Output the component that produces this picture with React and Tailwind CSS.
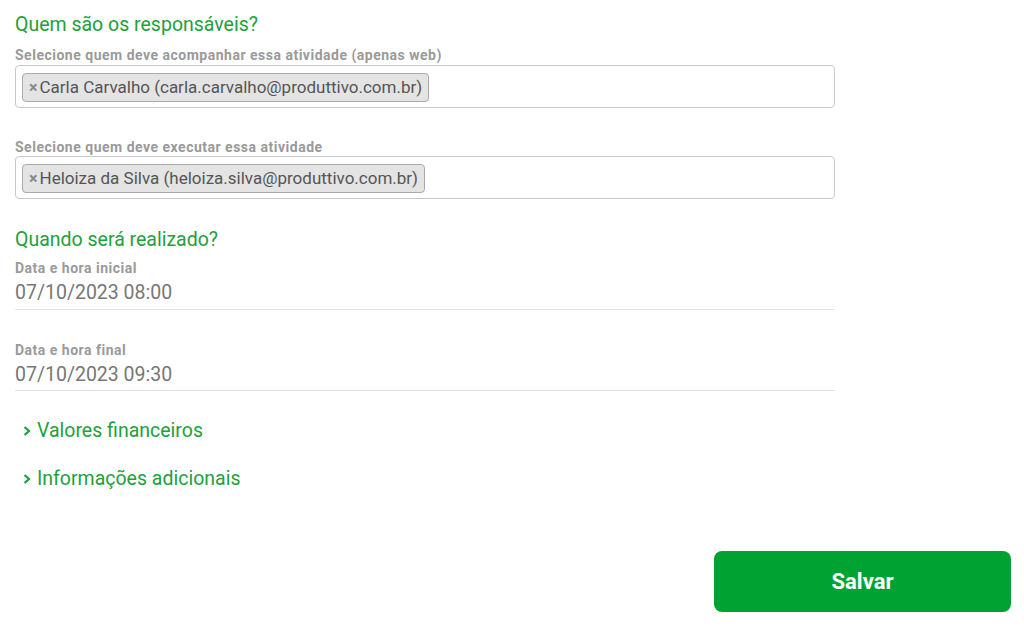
export default function App() {
  const font = { fontFamily: 'Roboto, "Liberation Sans", sans-serif' };

  return (
    <div className="w-[1024px] h-[635px] bg-white overflow-hidden" style={font}>
      <div className="w-[820px] ml-[15px] pt-[13px]">
        {/* Responsáveis */}
        <h2 className="text-[19.5px] leading-[24px] text-[#1ea03c]">Quem são os responsáveis?</h2>
        <label className="block mt-[9px] text-[14px] leading-[18px] font-bold tracking-[0.5px] text-[#9a9a9a]">
          Selecione quem deve acompanhar essa atividade (apenas web)
        </label>
        <div className="mt-[1px] h-[43px] border border-[#c8c8c8] rounded-[4px] px-[6px] pt-[7px]">
          <span className="inline-flex items-center h-[29px] px-[6px] bg-[#e4e4e4] border border-[#aaaaaa] rounded-[4px] text-[17px] text-[#555555]">
            <span className="text-[16px] font-bold text-[#888] mr-[2px]">×</span>
            Carla Carvalho (carla.carvalho@produttivo.com.br)
          </span>
        </div>

        <label className="block mt-[30px] text-[14px] leading-[18px] font-bold tracking-[0.5px] text-[#9a9a9a]">
          Selecione quem deve executar essa atividade
        </label>
        <div className="h-[43px] border border-[#c8c8c8] rounded-[4px] px-[6px] pt-[7px]">
          <span className="inline-flex items-center h-[29px] px-[6px] bg-[#e4e4e4] border border-[#aaaaaa] rounded-[4px] text-[17px] text-[#555555]">
            <span className="text-[16px] font-bold text-[#888] mr-[2px]">×</span>
            Heloiza da Silva (heloiza.silva@produttivo.com.br)
          </span>
        </div>

        {/* Quando */}
        <h2 className="mt-[29px] text-[19.5px] leading-[24px] text-[#1ea03c]">Quando será realizado?</h2>
        <label className="block mt-[7px] text-[14px] leading-[18px] font-bold tracking-[0.5px] text-[#9a9a9a]">
          Data e hora inicial
        </label>
        <div className="h-[33px] border-b border-[#e3e3e3] text-[19.5px] leading-[32px] text-[#777777]">
          07/10/2023 08:00
        </div>

        <label className="block mt-[31px] text-[14px] leading-[18px] font-bold tracking-[0.5px] text-[#9a9a9a]">
          Data e hora final
        </label>
        <div className="h-[32px] border-b border-[#e3e3e3] text-[19.5px] leading-[31px] text-[#777777]">
          07/10/2023 09:30
        </div>

        <div className="mt-[28px] ml-[7px] flex items-center gap-[5px] h-[24px] text-[19.5px] text-[#1ea03c]">
          <svg width="10" height="12" viewBox="0 0 10 12" fill="none">
            <path d="M2.5 2L7 6L2.5 10" stroke="#1ea03c" strokeWidth="2.2" />
          </svg>
          Valores financeiros
        </div>
        <div className="mt-[24px] ml-[7px] flex items-center gap-[5px] h-[24px] text-[19.5px] text-[#1ea03c]">
          <svg width="10" height="12" viewBox="0 0 10 12" fill="none">
            <path d="M2.5 2L7 6L2.5 10" stroke="#1ea03c" strokeWidth="2.2" />
          </svg>
          Informações adicionais
        </div>
      </div>

      <div className="flex justify-end pr-[13px] mt-[60px]">
        <button className="w-[297px] h-[61px] rounded-[8px] bg-[#00a332] text-white text-[22px] font-bold">
          Salvar
        </button>
      </div>
    </div>
  );
}
